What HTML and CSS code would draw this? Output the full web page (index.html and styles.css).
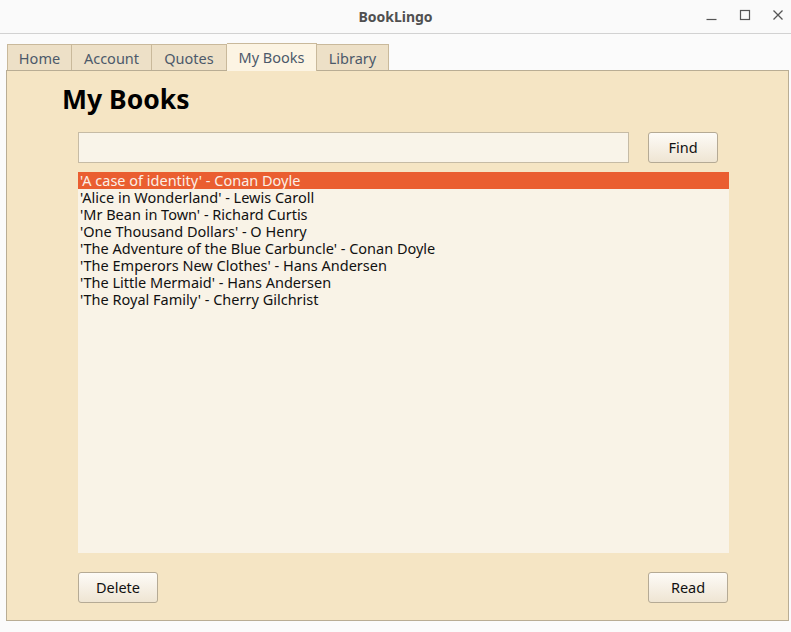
FILE: index.html
```html
<!DOCTYPE html>
<html>
<head>
<meta charset="utf-8">
<link rel="stylesheet" href="styles.css">
</head>
<body>
<div class="window">
  <header class="titlebar">
    <span class="title">BookLingo</span>
    <div class="controls">
      <svg class="ctl" width="14" height="14" viewBox="0 0 14 14"><path d="M1.5 11.5h10" stroke="#555" stroke-width="1.2" fill="none"/></svg>
      <svg class="ctl" width="14" height="14" viewBox="0 0 14 14"><rect x="2.5" y="2.5" width="9" height="9" stroke="#555" stroke-width="1.2" fill="none"/></svg>
      <svg class="ctl" width="14" height="14" viewBox="0 0 14 14"><path d="M2.5 2.5l9 9M11.5 2.5l-9 9" stroke="#555" stroke-width="1.3" fill="none"/></svg>
    </div>
  </header>
  <div class="content">
    <nav class="tabs">
      <span class="tab">Home</span>
      <span class="tab">Account</span>
      <span class="tab">Quotes</span>
      <span class="tab active">My Books</span>
      <span class="tab">Library</span>
    </nav>
    <section class="panel">
      <h1 class="heading">My Books</h1>
      <div class="search-row">
        <input class="search" type="text">
        <button class="btn find">Find</button>
      </div>
      <ul class="list">
        <li class="item selected">'A case of identity' - Conan Doyle</li>
        <li class="item">'Alice in Wonderland' - Lewis Caroll</li>
        <li class="item">'Mr Bean in Town' - Richard Curtis</li>
        <li class="item">'One Thousand Dollars' - O Henry</li>
        <li class="item">'The Adventure of the Blue Carbuncle' - Conan Doyle</li>
        <li class="item">'The Emperors New Clothes' - Hans Andersen</li>
        <li class="item">'The Little Mermaid' - Hans Andersen</li>
        <li class="item">'The Royal Family' - Cherry Gilchrist</li>
      </ul>
      <div class="actions">
        <button class="btn">Delete</button>
        <button class="btn">Read</button>
      </div>
    </section>
  </div>
</div>
</body>
</html>
```
FILE: styles.css
```css
* { box-sizing: border-box; }
html, body { margin: 0; padding: 0; }
body {
  width: 791px;
  height: 632px;
  background: #fbfbfb;
  font-family: "Noto Sans", "DejaVu Sans", sans-serif;
  overflow: hidden;
}
.window { width: 791px; height: 632px; display: flex; flex-direction: column; }
.titlebar {
  height: 34px;
  background: #fafafa;
  border-bottom: 1px solid #d2d2d2;
  display: flex;
  align-items: center;
  justify-content: center;
  position: relative;
}
.title {
  font-weight: bold;
  font-size: 14px;
  color: #505050;
  margin-top: -1px;
}
.controls {
  position: absolute;
  right: 6px;
  top: 8px;
  display: flex;
  gap: 19px;
}
.ctl { display: block; }
.content {
  flex: 1;
  padding: 9px 2px 11px 6px;
  display: flex;
  flex-direction: column;
}
.tabs {
  display: flex;
  align-items: flex-end;
  height: 27px;
  padding-left: 1px;
}
.tab {
  height: 26px;
  border: 1px solid #c9b99b;
  border-bottom: none;
  border-left: none;
  background: #ede0c7;
  color: #4c596a;
  font-size: 14.5px;
  padding: 1px 0 0;
  display: flex;
  align-items: center;
  justify-content: center;
}
.tab:nth-child(1) { width: 65px; border-left: 1px solid #c9b99b; }
.tab:nth-child(2) { width: 80px; }
.tab:nth-child(3) { width: 75px; }
.tab:nth-child(4) { width: 90px; }
.tab:nth-child(5) { width: 72px; }
.tab.active {
  height: 28px;
  background: #fcf4e3;
  padding: 0 0 2px;
  margin-bottom: -1px;
  position: relative;
  z-index: 1;
}
.panel {
  flex: 1;
  background: #f5e5c4;
  border: 1px solid #b9ad94;
  padding: 12px 59px 0 71px;
  display: flex;
  flex-direction: column;
}
.heading {
  margin: 0 0 0 -16px;
  font-size: 26.5px;
  line-height: 32px;
  font-weight: bold;
  color: #000;
}
.search-row {
  display: flex;
  gap: 19px;
  margin-top: 17px;
  width: 640px;
}
.search {
  flex: 1;
  height: 31px;
  border: 1px solid #c6bba5;
  background: #f9f4e9;
  margin: 0;
  padding: 0 6px;
  outline: none;
}
.btn {
  width: 80px;
  height: 31px;
  border: 1px solid #b5aa95;
  border-radius: 3px;
  background: linear-gradient(#fdfbf7, #efe5d3);
  font-family: inherit;
  font-size: 14.5px;
  color: #111;
  padding: 0 0 2px;
}
.btn.find { width: 70px; }
.list {
  list-style: none;
  margin: 9px 0 0 0;
  padding: 0;
  height: 381px;
  background: #f9f3e7;
}
.item {
  height: 17px;
  line-height: 17px;
  font-size: 14.5px;
  padding-left: 2px;
  color: #111;
  white-space: nowrap;
}
.item.selected {
  background: #ea5e30;
  color: #fbeee6;
}
.actions {
  display: flex;
  justify-content: space-between;
  margin-top: 19px;
  padding-right: 1px;
}
```
